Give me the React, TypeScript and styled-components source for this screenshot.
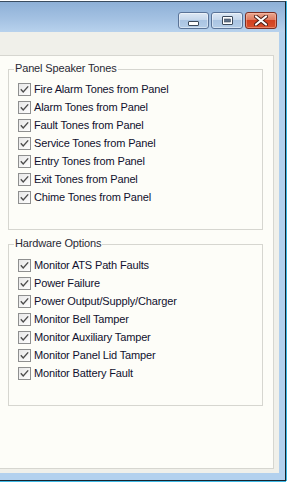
import React from 'react';
import styled, { createGlobalStyle } from 'styled-components';

const GlobalStyle = createGlobalStyle`
  html, body {
    margin: 0;
    padding: 0;
    background: #ffffff;
  }
  body {
    font-family: "Liberation Sans", Arial, sans-serif;
  }
`;

const Page = styled.div`
  width: 287px;
  height: 486px;
  overflow: hidden;
  padding-top: 1px;
  box-sizing: border-box;
`;

const Frame = styled.div`
  width: 286px;
  height: 480px;
  box-sizing: border-box;
  display: flex;
  flex-direction: column;
  background: #b3d1ee;
  border-top: 1px solid #3a4c60;
  border-right: 1px solid #16242e;
  border-bottom: 1px solid #16242e;
  box-shadow: 1px 0 0 #3fb8e4, 0 1px 0 #3fb8e4;
`;

const TitleBar = styled.div`
  height: 30px;
  flex: none;
  display: flex;
  justify-content: flex-end;
  align-items: flex-start;
  gap: 2px;
  padding: 10px 8px 0 0;
  box-sizing: border-box;
  background: linear-gradient(to bottom, #8eb0d7 0%, #a3c1e2 55%, #b8d2ed 100%);
`;

const CaptionButton = styled.div<{ $close?: boolean; $w: number }>`
  width: ${p => p.$w}px;
  height: 17px;
  box-sizing: border-box;
  border-radius: 3px;
  border: 1px solid ${p => (p.$close ? '#7b2d22' : '#5a7397')};
  display: flex;
  align-items: center;
  justify-content: center;
  box-shadow: inset 0 0 0 1px ${p => (p.$close ? 'rgba(255,200,180,0.45)' : 'rgba(255,255,255,0.45)')};
  background: ${p =>
    p.$close
      ? 'linear-gradient(to bottom, #eaa890 0%, #e07a5f 45%, #d2401f 50%, #d8512e 100%)'
      : 'linear-gradient(to bottom, #dde8f4 0%, #c6d8ec 45%, #aac4e2 50%, #b4cde8 100%)'};
`;

const Client = styled.div`
  flex: 1;
  margin: 0 6px 7px 0;
  background: #f0f0ea;
  padding: 23px 5px 4px 0;
  display: flex;
  flex-direction: column;
`;

const Panel = styled.div`
  flex: 1;
  background: #fdfdf8;
  border: 1px solid #d6d6d0;
  border-left: none;
  padding: 13px 10px 0 8px;
  display: flex;
  flex-direction: column;
  gap: 14px;
`;

const Group = styled.div<{ $h: number }>`
  height: ${p => p.$h}px;
  box-sizing: border-box;
  border: 1px solid #d6d6d0;
  padding: 0 0 0 9px;
`;

const GroupTitle = styled.div`
  width: fit-content;
  margin: -8px 0 0 -4px;
  padding: 0 1px;
  background: #fdfdf8;
  font-size: 11px;
  line-height: 13px;
  letter-spacing: -0.15px;
  color: #2a2a35;
`;

const Rows = styled.div<{ $top: number }>`
  margin-top: ${p => p.$top}px;
  display: flex;
  flex-direction: column;
`;

const Row = styled.div`
  height: 18px;
  display: flex;
  align-items: center;
  gap: 3px;
  font-size: 11px;
  letter-spacing: -0.15px;
  color: #10102e;
  white-space: nowrap;
`;

const Box = styled.svg`
  flex: none;
  display: block;
`;

const Check = () => (
  <Box width="13" height="13" viewBox="0 0 13 13">
    <defs>
      <linearGradient id="cbg" x1="0" y1="0" x2="1" y2="1">
        <stop offset="0" stopColor="#e6e6e6" />
        <stop offset="1" stopColor="#ffffff" />
      </linearGradient>
    </defs>
    <rect x="0.5" y="0.5" width="12" height="12" fill="url(#cbg)" stroke="#8e8f8f" />
    <polyline points="2.8,6.3 5.2,8.9 10.2,3.4" fill="none" stroke="#4d4d4d" strokeWidth="1.4" />
  </Box>
);

const MinIcon = () => (
  <svg width="11" height="6" viewBox="0 0 11 6" style={{ marginTop: 5 }}>
    <rect x="0.5" y="1.5" width="10" height="4" rx="0.5" fill="#ffffff" stroke="#3c4a5c" />
  </svg>
);

const MaxIcon = () => (
  <svg width="11" height="9" viewBox="0 0 11 9">
    <rect x="0.5" y="0.5" width="10" height="8" rx="0.5" fill="#ffffff" stroke="#3c4a5c" />
    <rect x="2.5" y="3" width="6" height="3" fill="#5d6f86" stroke="#3c4a5c" strokeWidth="0.6" />
  </svg>
);

const CloseIcon = () => (
  <svg width="14" height="11" viewBox="0 0 14 11">
    <path d="M2 1.5 L12 9.5 M12 1.5 L2 9.5" stroke="#4a1c14" strokeWidth="4" strokeLinecap="round" />
    <path d="M2 1.5 L12 9.5 M12 1.5 L2 9.5" stroke="#ffffff" strokeWidth="2.2" strokeLinecap="round" />
  </svg>
);

const speakerTones = [
  'Fire Alarm Tones from Panel',
  'Alarm Tones from Panel',
  'Fault Tones from Panel',
  'Service Tones from Panel',
  'Entry Tones from Panel',
  'Exit Tones from Panel',
  'Chime Tones from Panel',
];

const hardwareOptions = [
  'Monitor ATS Path Faults',
  'Power Failure',
  'Power Output/Supply/Charger',
  'Monitor Bell Tamper',
  'Monitor Auxiliary Tamper',
  'Monitor Panel Lid Tamper',
  'Monitor Battery Fault',
];

const App: React.FC = () => {
  return (
    <Page>
      <GlobalStyle />
      <Frame>
        <TitleBar>
          <CaptionButton $w={31}><MinIcon /></CaptionButton>
          <CaptionButton $w={32}><MaxIcon /></CaptionButton>
          <CaptionButton $w={32} $close><CloseIcon /></CaptionButton>
        </TitleBar>
        <Client>
          <Panel>
            <Group $h={161}>
              <GroupTitle>Panel Speaker Tones</GroupTitle>
              <Rows $top={5}>
                {speakerTones.map(t => (
                  <Row key={t}><Check />{t}</Row>
                ))}
              </Rows>
            </Group>
            <Group $h={162}>
              <GroupTitle>Hardware Options</GroupTitle>
              <Rows $top={6}>
                {hardwareOptions.map(t => (
                  <Row key={t}><Check />{t}</Row>
                ))}
              </Rows>
            </Group>
          </Panel>
        </Client>
      </Frame>
    </Page>
  );
};

export default App;
